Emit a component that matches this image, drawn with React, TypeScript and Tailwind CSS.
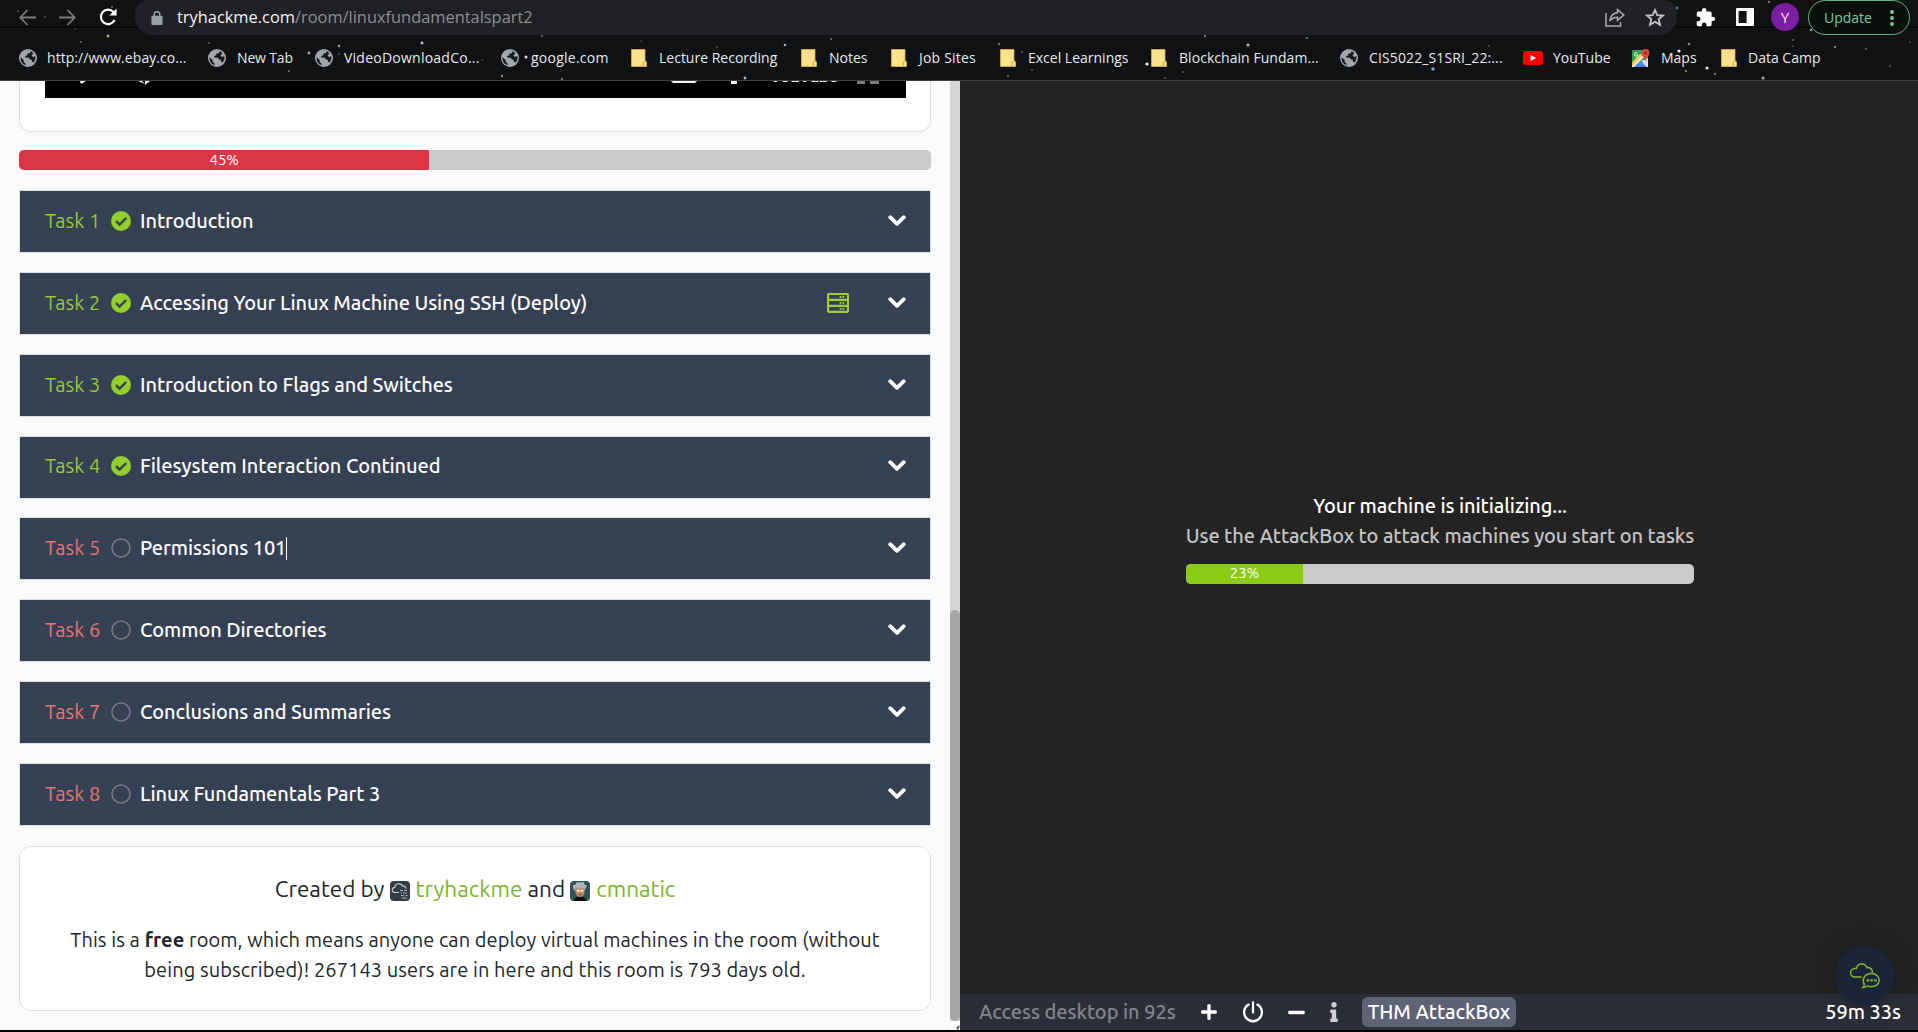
import type { ReactNode } from "react";
import { FaPlus, FaMinus, FaInfo } from "react-icons/fa";
import { MdExtension } from "react-icons/md";

type IconKind = "globe" | "folder" | "youtube" | "maps";

const bookmarks: { icon: IconKind; label: string; width: string; slot: string }[] = [
  { icon: "globe", label: "http://www.ebay.co...", width: "w-[189px] tracking-[0.05px]", slot: "w-[28px]" },
  { icon: "globe", label: "New Tab", width: "w-[107px] tracking-[-0.15px]", slot: "w-[29px]" },
  { icon: "globe", label: "VideoDownloadCo...", width: "w-[186px] tracking-[0.24px]", slot: "w-[29px]" },
  { icon: "globe", label: "google.com", width: "w-[130px] tracking-[0.25px]", slot: "w-[30px]" },
  { icon: "folder", label: "Lecture Recording", width: "w-[170px]", slot: "w-[28px]" },
  { icon: "folder", label: "Notes", width: "w-[90px]", slot: "w-[28px]" },
  { icon: "folder", label: "Job Sites", width: "w-[109px] tracking-[0.2px]", slot: "w-[28px]" },
  { icon: "folder", label: "Excel Learnings", width: "w-[151px]", slot: "w-[28px]" },
  { icon: "folder", label: "Blockchain Fundam...", width: "w-[189px] tracking-[0.05px]", slot: "w-[28px]" },
  { icon: "globe", label: "CIS5022_S1SRI_22:...", width: "w-[183px] tracking-[0.12px]", slot: "w-[29px]" },
  { icon: "youtube", label: "YouTube", width: "w-[109px]", slot: "w-[30px]" },
  { icon: "maps", label: "Maps", width: "w-[89px]", slot: "w-[29px]" },
  { icon: "folder", label: "Data Camp", width: "w-[110px]", slot: "w-[27px]" },
];

const tasks = [
  { title: "Introduction", done: true },
  { title: "Accessing Your Linux Machine Using SSH (Deploy)", done: true, machine: true },
  { title: "Introduction to Flags and Switches", done: true },
  { title: "Filesystem Interaction Continued", done: true },
  { title: "Permissions 101", done: false, caret: true },
  { title: "Common Directories", done: false },
  { title: "Conclusions and Summaries", done: false },
  { title: "Linux Fundamentals Part 3", done: false },
];

// x, y, radius, colour of each star in the toolbar theme
const stars: [number, number, number, string][] = [
  [108, 36, 1.4, "#b5a98c"], [81, 42, 0.9, "#777"], [75, 29, 0.8, "#555"], [209, 43, 0.9, "#666"],
  [422, 43, 1.4, "#c9c9d2"], [339, 46, 1.3, "#aaa"], [309, 53, 1.4, "#b5a98c"], [526, 57, 1.5, "#d8e0e6"],
  [542, 36, 1.1, "#777"], [289, 71, 1.1, "#777"], [502, 76, 1.2, "#8a8a90"], [562, 79, 1.2, "#777"],
  [482, 60, 0.8, "#555"], [339, 54, 0.9, "#666"], [785, 45, 1.3, "#9fb0c4"], [831, 39, 1.1, "#777"],
  [717, 47, 0.9, "#555"], [745, 78, 1.4, "#9fb0c4"], [641, 41, 0.9, "#444"], [999, 44, 1.2, "#6d6d9a"],
  [1022, 52, 1.2, "#4b4b70"], [1147, 64, 1.6, "#f2f2f2"], [1008, 76, 1.2, "#555"], [1032, 70, 1, "#555"],
  [1183, 72, 1.1, "#555"], [1205, 36, 1.2, "#777"], [1248, 45, 1.5, "#c4bfa8"], [1165, 78, 1.1, "#555"],
  [1307, 38, 1.3, "#4c6480"], [1677, 8, 1.4, "#5d7da0"], [1433, 69, 1.8, "#6ea3dd"], [1489, 46, 1, "#555"],
  [1689, 44, 1.3, "#888"], [1679, 51, 1.6, "#e8e8e8"], [1707, 68, 1.6, "#e8e8e8"], [1715, 74, 1.2, "#777"],
  [1763, 78, 1.6, "#a5a5aa"], [1686, 71, 1.2, "#8a7a5c"], [1811, 30, 1.3, "#7f95ad"], [1793, 40, 1.1, "#666"],
  [1835, 47, 1.2, "#888"], [1866, 49, 1.1, "#666"], [1890, 66, 1, "#555"], [1769, 2, 1.2, "#777"],
  [18, 11, 1, "#555"], [45, 17, 1, "#555"], [112, 7, 1.1, "#666"], [1793, 46, 1, "#444"], [1910, 42, 1, "#444"],
];

function Globe() {
  return (
    <svg viewBox="0 0 18 18" className="size-[18px]">
      <circle cx="9" cy="9" r="9" fill="#a3a7ab" />
      <path d="M1.6 8.2 L4.6 11 L4.8 13 L6.6 14.4 L6.6 16.2 A7.6 7.6 0 0 1 1.6 8.2Z" fill="#17191c" />
      <path d="M8.6 1.5 L11.6 2 L11 4.2 L8.4 4.6 L8.2 6.4 L6 7 L6.4 8.6 L9.8 8.8 L11 10.6 L12.6 10.8 L13.2 13 L14.8 13.6 A7.6 7.6 0 0 0 16.3 7 L14 8 L12.4 6.6 L14 5 L13.4 3 A7.6 7.6 0 0 0 8.6 1.5Z" fill="#17191c" />
    </svg>
  );
}

function Folder() {
  return (
    <svg viewBox="0 0 16 18" className="h-[18px] w-4">
      <path d="M0.5 0.5 H14 V11.5 L15.6 13 V17.5 H0.5Z" fill="#fde28b" stroke="#d9b544" strokeWidth="0.8" />
      <path d="M12.2 17.4 V12.8 H14" fill="none" stroke="#d9a92e" strokeWidth="1" />
    </svg>
  );
}

function YouTube() {
  return (
    <svg viewBox="0 0 20 14" className="h-3.5 w-5">
      <rect width="20" height="14" rx="3" fill="#fe0000" />
      <path d="M7.6 4 L13.2 7 L7.6 10Z" fill="#fff" />
    </svg>
  );
}

function Maps() {
  return (
    <svg viewBox="0 0 18 18" className="size-[18px]">
      <rect x="0" y="1" width="16" height="17" rx="1.5" fill="#2f9e4f" />
      <path d="M16 9 V18 H13 L9 12Z" fill="#dfe3e8" />
      <path d="M2 18 L8.6 11 L14.6 18Z" fill="#4a89e8" />
      <path d="M0 16 L10 5.5 L12 8 L2 18 H0Z" fill="#f4f4f4" />
      <path d="M0 13.6 L8.4 4.6 L10.2 6.6 L0 17.4Z" fill="#f6c945" />
      <path d="M13.4 0 a4 4 0 0 1 4 4 c0 3 -3.4 4.6 -4 9 c-.6 -4.4 -4 -6 -4 -9 a4 4 0 0 1 4 -4Z" fill="#e2493b" />
      <circle cx="13.4" cy="4" r="1.4" fill="#8c2219" />
      <path d="M5.6 4.2 A1.8 1.8 0 1 0 6 6 H4.4" fill="none" stroke="#fff" strokeWidth="0.9" />
    </svg>
  );
}

const icons: Record<IconKind, ReactNode> = { globe: <Globe />, folder: <Folder />, youtube: <YouTube />, maps: <Maps /> };

function Browser() {
  return (
    <header className="relative h-[81px] shrink-0 overflow-hidden border-b border-[#3f4042] bg-[#0f1113] font-['Open_Sans',sans-serif]">
      <svg className="absolute inset-0" width="1918" height="80">
        <rect y="26.5" width="1918" height="1.2" fill="#000" />
        {stars.map(([x, y, r, fill], i) => (
          <circle key={i} cx={x} cy={y} r={r} fill={fill} />
        ))}
      </svg>
      <div className="relative flex h-[35px] items-start">
        <div className="flex w-[135px] items-center pt-2 pl-[19px]">
          <svg viewBox="0 0 17 17" className="size-[17px]" fill="none" stroke="#7b7c7f" strokeWidth="1.8">
            <path d="M17 8.5 H1.5 M8.5 1 L1.3 8.5 L8.5 16" />
          </svg>
          <svg viewBox="0 0 17 17" className="ml-[23px] size-[17px]" fill="none" stroke="#7b7c7f" strokeWidth="1.8">
            <path d="M0 8.5 H15.5 M8.5 1 L15.7 8.5 L8.5 16" />
          </svg>
          <svg viewBox="0 0 18 18" className="ml-[23px] size-[18px]">
            <path d="M15.6 12 A7.2 7.2 0 1 1 14.6 4.2" fill="none" stroke="#fff" strokeWidth="2.2" />
            <path d="M17.6 0.6 V7.6 H10.4Z" fill="#fff" />
          </svg>
        </div>
        <div className="flex h-[35px] w-[1542px] items-center rounded-b-[18px] rounded-tl-[14px] rounded-tr-[14px] bg-[#202124] pl-[16px] text-[16.4px]">
          <svg viewBox="0 0 12 15" className="h-[14px] w-3">
            <rect y="5" width="12" height="10" rx="1.2" fill="#9aa0a6" />
            <path d="M3 6 V3.8 a3 3 0 0 1 6 0 V6" fill="none" stroke="#9aa0a6" strokeWidth="1.6" />
          </svg>
          <div className="ml-[14px] text-[#8c8f93]">
            <span className="text-[#f1f3f4]">tryhackme.com</span>/room/linuxfundamentalspart2
          </div>
          <div className="mr-[12px] ml-auto flex items-center gap-[20px]">
            <svg viewBox="0 0 20 19" className="h-[19px] w-5" fill="none" stroke="#a9acb0" strokeWidth="1.5">
              <path d="M1 5 V18 H15.5 V14" />
              <path d="M12.5 1.5 L18.8 7 L12.5 12.3 V9.2 C9 9.2 6.5 10.6 4.8 13.2 C5.3 8.6 8 5.2 12.5 4.8Z" />
            </svg>
            <svg viewBox="0 0 20 19" className="h-[19px] w-5" fill="none" stroke="#c4c6c9" strokeWidth="1.8">
              <path d="M10 2 L12.3 7.1 L18 7.6 L13.7 11.2 L15 16.8 L10 13.8 L5 16.8 L6.3 11.2 L2 7.6 L7.7 7.1Z" />
            </svg>
          </div>
        </div>
        <MdExtension className="mt-[7px] ml-[18px] size-[21px] text-white" />
        <svg viewBox="0 0 18 18" className="mt-2 ml-[20px] size-[18px]">
          <rect width="18" height="18" rx="1" fill="#fff" />
          <rect x="2.6" y="3" width="8" height="12" fill="#111" />
        </svg>
        <div className="mt-[3px] ml-[17px] flex size-7 items-center justify-center rounded-full bg-[#7b1fa2] text-[15px] text-[#f0e6f4]">Y</div>
        <div className="ml-[9px] flex h-[35px] w-[102px] items-center rounded-[18px] border-[1.5px] border-[#6dae84] bg-[#0c100d] pl-[15px] text-[14px] text-[#81c995]">
          Update
          <svg viewBox="0 0 4 18" className="ml-[18px] h-[18px] w-1" fill="#81c995">
            <circle cx="2" cy="3" r="1.9" />
            <circle cx="2" cy="9" r="1.9" />
            <circle cx="2" cy="15" r="1.9" />
          </svg>
        </div>
      </div>
      <nav className="relative flex h-[45px] items-center pl-[19px] text-[14px] whitespace-nowrap text-[#e8eaed]">
        {bookmarks.map((b) => (
          <div key={b.label} className={`flex shrink-0 items-center ${b.width}`}>
            <span className={`shrink-0 ${b.slot}`}>{icons[b.icon]}</span>
            {b.label}
          </div>
        ))}
      </nav>
    </header>
  );
}

function ServerIcon() {
  return (
    <svg viewBox="0 0 22 20" className="mr-[39px] ml-auto h-5 w-[22px]" stroke="#a0ce38" fill="none">
      <rect x="1" y="1" width="20" height="17.8" rx="1.2" strokeWidth="2.2" />
      <path d="M1 6.9 H21 M1 12.9 H21" strokeWidth="2.2" />
      <path d="M12.6 4 H14.4 M15.4 4 H17.2 M12.6 9.9 H14.4 M15.4 9.9 H17.2 M12.6 15.8 H14.4 M15.4 15.8 H17.2" strokeWidth="1.8" />
    </svg>
  );
}

function Task({ n, title, done, machine, caret }: { n: number; title: string; done: boolean; machine?: boolean; caret?: boolean }) {
  return (
    <div className="flex h-[63px] items-center border border-[#d9dfe6] bg-[#364053] pr-[24.5px] pb-[1.2px] pl-[25px]">
      <span className={`w-[65.5px] shrink-0 text-xl ${done ? "text-[#94c93a]" : "text-[#e27873]"}`}>Task {n}</span>
      <svg viewBox="0 0 20 20" className="size-5 shrink-0">
        {done ? (
          <>
            <circle cx="10" cy="10" r="10" fill="#92cf2c" />
            <path d="M5 10.2 L8.6 13.6 L15.2 7" fill="none" stroke="#364053" strokeWidth="2.4" />
          </>
        ) : (
          <circle cx="10" cy="10" r="9" fill="none" stroke="#77797e" strokeWidth="1.6" />
        )}
      </svg>
      <span className="ml-[9.5px] text-xl font-medium tracking-[-0.08px] whitespace-nowrap text-[#fbfbfb]">{title}</span>
      {caret && <span className="h-[23px] w-px bg-white" />}
      {machine && <ServerIcon />}
      <svg viewBox="0 0 18 12" className={`h-3 w-[18px] ${machine ? "" : "ml-auto"}`} fill="none" stroke="#fff" strokeWidth="3.8" strokeLinecap="round" strokeLinejoin="round">
        <path d="M2.2 2.2 L9 8.8 L15.8 2.2" />
      </svg>
    </div>
  );
}

function PlayerFooter() {
  return (
    <div className="relative ml-[25px] h-[17px] w-[861px] overflow-hidden bg-black">
      <svg className="absolute inset-0" width="861" height="17">
        <path d="M35 0 H41 L36 3Z M93 0 H97 L100 3Z M100 0 H105 L100 4Z M626 0 H652 L650 2 H628Z M686 0 H692 V3 H686Z" fill="#f5f5f5" />
        <path d="M812 0 H820 V3 H812Z M825 0 H834 V3 H825Z" fill="#7d7d7d" />
      </svg>
      <span className="absolute -top-[17px] left-[725px] font-['Roboto',sans-serif] text-[17px] leading-[25px] font-black text-white">YouTube</span>
    </div>
  );
}

function AvatarCloud() {
  return (
    <svg viewBox="0 0 20 20" className="mr-1.5 inline-block size-5 align-[-4px]">
      <rect width="20" height="20" rx="4" fill="#333b44" />
      <path d="M9 11.5 H5 a2.6 2.6 0 0 1 -.2 -5.2 A4 4 0 0 1 12.4 5 a2.8 2.8 0 0 1 3.6 2.8" fill="none" stroke="#c9cdd1" strokeWidth="1.2" />
      <path d="M10 9.5 H13 M14 9.5 H17 M10.5 12 H12 M13 12 H17 M11 14.5 H14 M15.5 14.5 H17.5 M12 17 H17" stroke="#a9afb5" strokeWidth="1.1" />
    </svg>
  );
}

function AvatarFace() {
  return (
    <svg viewBox="0 0 20 20" className="mr-1.5 inline-block size-5 align-[-4px]">
      <rect width="20" height="20" rx="4" fill="#2f5257" />
      <path d="M4 20 C4 16.5 7 15.5 10 15.5 C14 15.5 16 17 16.5 20Z" fill="#0c0d12" />
      <ellipse cx="10" cy="10.5" rx="4.6" ry="5.6" fill="#b98a66" />
      <path d="M3.6 8.6 L2.6 4.6 L5.4 3.6 L7 1 L10.5 1.6 L13.6 .8 L14.6 3.4 L17.2 5 L15.4 7.2 L15.2 9.8 L13 6.8 L9 7.4 L6 7 L5 10.6Z" fill="#aeb1b8" />
      <circle cx="8.2" cy="9.8" r="1.4" fill="#f1e4b8" />
      <circle cx="12" cy="9.8" r="1.4" fill="#f1e4b8" />
      <path d="M8.5 13.6 H11.5" stroke="#6b3f2a" strokeWidth="0.8" />
    </svg>
  );
}

export default function App() {
  return (
    <div className="flex h-[1032px] w-[1918px] flex-col overflow-hidden bg-black pb-[2px] font-['Ubuntu','Noto_Sans',sans-serif]">
      <Browser />
      <div className="flex min-h-0 flex-1">
        <main className="w-[950px] shrink-0 bg-[#fafafa] px-[19px]">
          <div className="h-[51px] rounded-b-xl border border-t-0 border-[#dedfe1] bg-white">
            <PlayerFooter />
          </div>
          <div className="mt-[18px] h-5 overflow-hidden rounded-[5px] bg-[#cacaca]">
            <div className="flex h-full w-[45%] items-center justify-center bg-[#dc3545] text-[15px] leading-5 text-white">45%</div>
          </div>
          <div className="mt-[20.1px] flex flex-col gap-[18.84px]">
            {tasks.map((t, i) => (
              <Task key={t.title} n={i + 1} {...t} />
            ))}
          </div>
          <footer className="mt-[20px] h-[165px] rounded-xl border border-[#dedfe1] bg-white pt-[25px] text-center text-[#212529]">
            <p className="text-[22.5px] leading-[34px]">
              Created by <AvatarCloud />
              <span className="text-[#7cb52b]">tryhackme</span> and <AvatarFace />
              <span className="text-[#7cb52b]">cmnatic</span>
            </p>
            <p className="mt-[19px] text-xl leading-[30px] tracking-[0.08px]">
              This is a <b>free</b> room, which means anyone can deploy virtual machines in the room (without
              <br />
              being subscribed)! 267143 users are in here and this room is 793 days old.
            </p>
          </footer>
        </main>
        <div className="flex w-[10px] shrink-0 flex-col bg-[#d6d4d5] pt-[529px]">
          <div className="h-[411px] rounded-[5px] bg-[#a6a6a6]" />
          <div className="flex flex-1 items-end justify-end bg-white">
            <svg viewBox="0 0 5 5" className="size-[5px]">
              <path d="M1 3 L4 0 V1.5 H5 V2.5 H3.5 V5 H2 V3.5Z" fill="#555" />
            </svg>
          </div>
        </div>
        <section className="relative flex flex-1 flex-col bg-[#232323]">
          <div className="flex flex-1 flex-col items-center pt-[410px] pl-[2px] text-xl leading-[30px] font-medium tracking-[-0.08px]">
            <p className="text-white">Your machine is initializing...</p>
            <p className="text-[#c4c4c4]">Use the AttackBox to attack machines you start on tasks</p>
            <div className="mt-[13px] h-5 w-[508px] overflow-hidden rounded-[5px] bg-[#cacaca]">
              <div className="flex h-full w-[23%] items-center justify-center bg-[#88cc14] pb-[2px] text-[15px] leading-5 font-normal text-white">23%</div>
            </div>
          </div>
          <div className="absolute right-[24px] bottom-[25px] size-[59px] rounded-full bg-[#1c2538] shadow-[0_0_24px_rgba(0,0,0,0.25)]">
            <svg viewBox="0 0 30 27" className="mt-[16px] ml-[15px] h-[27px] w-[30px]" fill="none" stroke="#86b52c" strokeWidth="1.5">
              <path d="M11.5 15 H5 a4.2 4.2 0 0 1 -.4 -8.4 H6.4 A5.4 5.4 0 0 1 16.8 5.6 C20.4 5 22.6 7.6 22.4 10.8" />
              <path d="M21.4 11.6 c4.4 0 7.8 2.9 7.8 6.6 s-3.4 6.6 -7.8 6.6 c-1.6 0 -3 -.4 -4.2 -1 c-1.2 1.2 -2.8 1.8 -4.4 1.8 c1 -.8 1.4 -2 1.4 -3.6 c-2.6 -5 .8 -10.4 7.2 -10.4Z" />
              <path d="M16.6 18.3 h2.4 M20.4 18.3 h2.4 M24.2 18.3 h2.4" strokeWidth="2.2" />
            </svg>
          </div>
          <div className="flex h-[36px] shrink-0 items-center bg-[#2b2d38] pr-[17px] pl-[19px] text-xl font-medium tracking-[-0.06px]">
            <span className="w-[221px] text-[#83858c]">Access desktop in 92s</span>
            <FaPlus className="size-[18px] text-white" />
            <svg viewBox="0 0 22 22" className="ml-[24px] size-[22px]" fill="none" stroke="#fff" strokeWidth="2.3" strokeLinecap="round">
              <path d="M6.6 3.6 A8.9 8.9 0 1 0 15.4 3.6 M11 1.4 V11.5" />
            </svg>
            <FaMinus className="ml-[23px] size-[19px] text-white" />
            <FaInfo className="ml-[18px] size-5 text-[#cfcfd3]" />
            <span className="ml-[18px] flex h-[30px] w-[154px] items-center justify-center rounded-md bg-[#5d6275] text-white">THM AttackBox</span>
            <span className="relative ml-auto text-white">59m 33s</span>
          </div>
        </section>
      </div>
    </div>
  );
}
